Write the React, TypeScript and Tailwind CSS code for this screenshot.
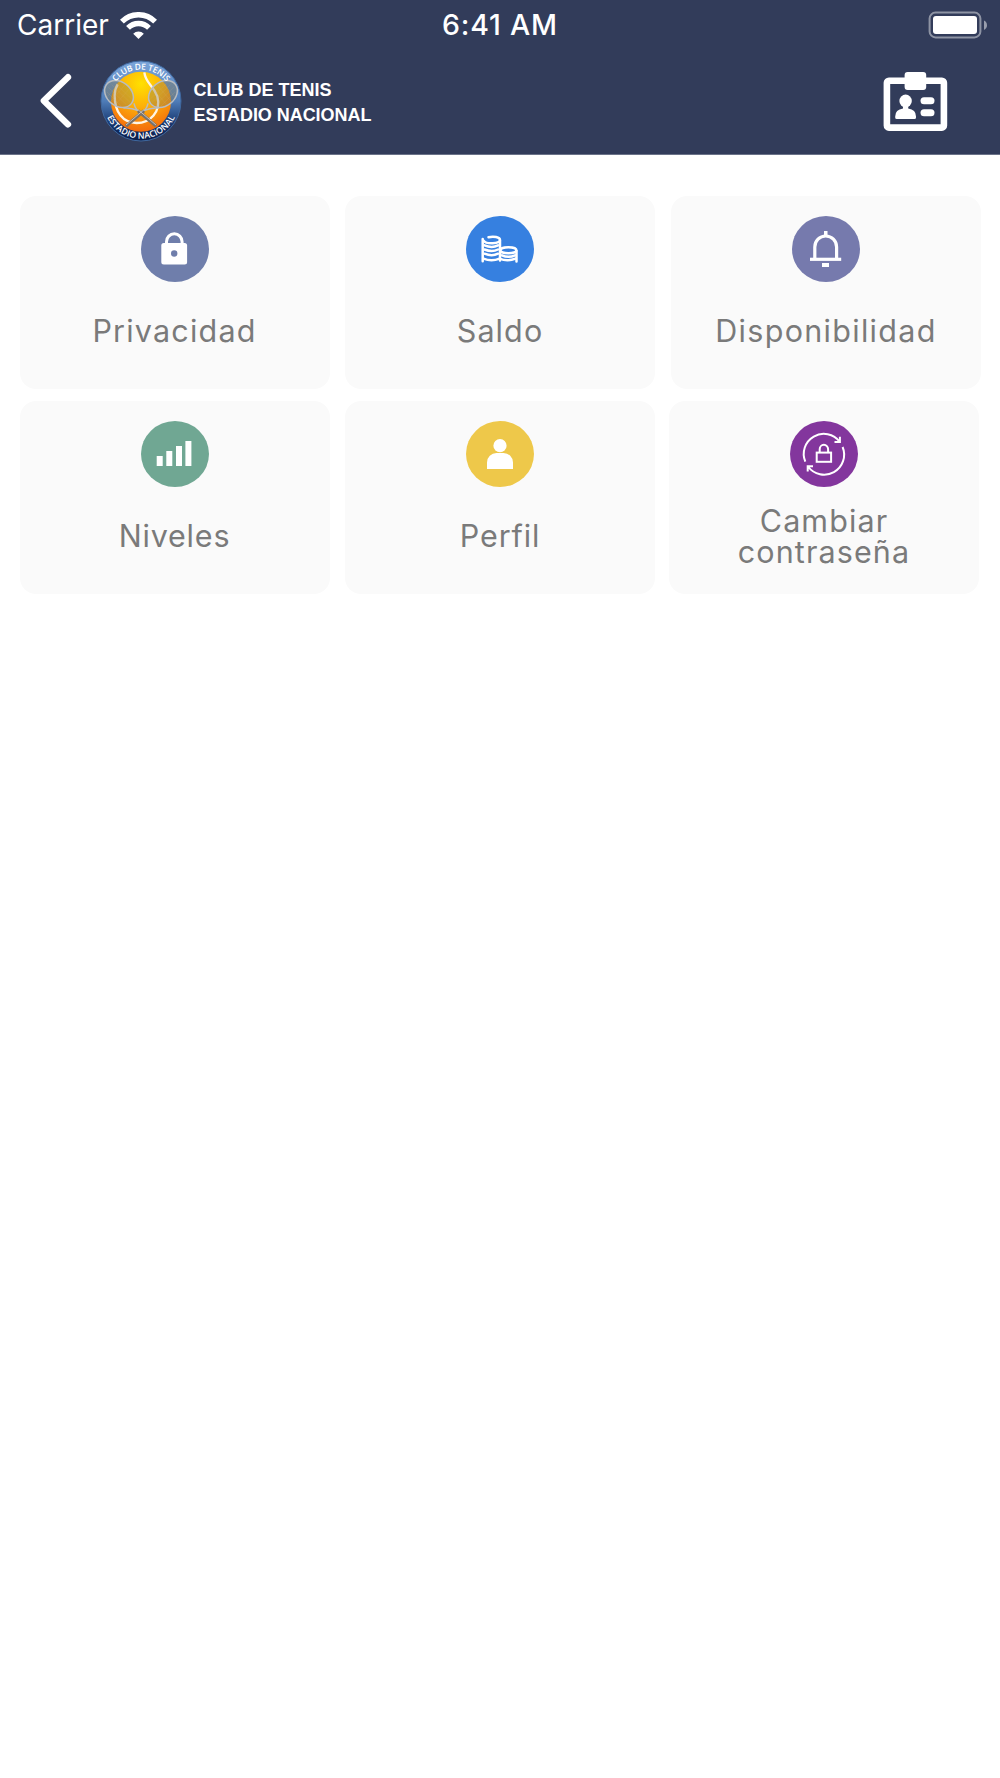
import type { ReactNode } from "react";

type TileProps = {
  label: string;
  color: string;
  className: string;
  textClass: string;
  children: ReactNode;
};

function Tile({ label, color, className, textClass, children }: TileProps) {
  return (
    <button className={`flex h-[193px] w-[310px] shrink-0 flex-col items-center rounded-[16px] bg-[#fafafa] pt-5 pb-[9px] ${className}`}>
      <svg width="68" height="66" viewBox="0 0 68 66" fill="none" className="shrink-0">
        <ellipse cx="34" cy="33" rx="34" ry="33" fill={color} />
        {children}
      </svg>
      <span className={`flex w-full flex-1 items-center justify-center text-center text-[30.5px] leading-[31.5px] text-[#7a7a7a] ${textClass}`}>
        {label}
      </span>
    </button>
  );
}

function StatusBar() {
  return (
    <div className="grid h-[50px] grid-cols-3 items-center text-white">
      <div className="flex items-center gap-[11px] pl-[17px]">
        <span className="text-[28px] leading-[50px]">Carrier</span>
        <svg width="37" height="27" viewBox="0 0 37 27" fill="none" stroke="#fff" strokeWidth="5.4">
          <path d="M1.9 9.6a23.4 23.4 0 0 1 33.2 0" />
          <path d="M8 15.9a14.8 14.8 0 0 1 21 0" />
          <path d="M18.5 27l-5.3-5.3a7.5 7.5 0 0 1 10.6 0z" fill="#fff" stroke="none" />
        </svg>
      </div>
      <span className="text-center text-[28.5px] font-medium leading-[50px] tracking-[0.8px]">6:41 AM</span>
      <div className="flex justify-end pr-[13px]">
        <svg width="59" height="28" viewBox="0 0 59 28" fill="none" className="-mt-px">
          <rect x="1.6" y="1.6" width="50.8" height="24.8" rx="6" stroke="#fff" strokeOpacity=".45" strokeWidth="2" />
          <rect x="5" y="5" width="44" height="18" rx="3" fill="#fff" />
          <path d="M56 9.5q3 1.5 3 4.7t-3 4.7z" fill="#fff" fillOpacity=".5" />
        </svg>
      </div>
    </div>
  );
}

function ClubLogo() {
  return (
    <svg width="82" height="82" viewBox="30 30 246 246" fill="none">
      <defs>
        <linearGradient id="ring" x1="0" y1="0" x2="0" y2="1">
          <stop offset="0" stopColor="#7ba5da" />
          <stop offset=".5" stopColor="#4f7db8" />
          <stop offset=".8" stopColor="#14336b" />
          <stop offset="1" stopColor="#0a1c48" />
        </linearGradient>
        <radialGradient id="ball" cx=".5" cy=".2" r=".85">
          <stop offset="0" stopColor="#ffe000" />
          <stop offset=".45" stopColor="#fdb00a" />
          <stop offset="1" stopColor="#f2620c" />
        </radialGradient>
        <path id="topArc" d="M57 155a96 96 0 0 1 192 0" />
        <path id="bottomArc" d="M40 153a113 113 0 0 0 226 0" />
      </defs>
      <circle cx="153" cy="153" r="120" fill="url(#ring)" stroke="#3f689f" strokeWidth="3" />
      <circle cx="153" cy="155" r="90" fill="url(#ball)" />
      <path d="M163 67c4 34 26 36 39 72 12 46-22 80-62 80-42 0-66-34-66-82 0-14 4-26 9-34" stroke="#fff5e4" strokeWidth="7" />
      {/* Rackets */}
      <g stroke="#b9bcc0" strokeWidth="4.5">
        <ellipse cx="87" cy="132" rx="47" ry="36" transform="rotate(38 87 132)" fill="#8a7c54" fillOpacity=".38" />
        <path d="M132 160q4 22 28 34M100 174q24-2 44 8" />
        <ellipse cx="219" cy="132" rx="47" ry="36" transform="rotate(-38 219 132)" fill="#8a7c54" fillOpacity=".38" />
        <path d="M174 160q-4 22-28 34M206 174q-24-2-44 8" />
      </g>
      <g stroke="#d8b877" strokeWidth="1" strokeOpacity=".45">
        <path d="M55 112l54 52M65 104l56 54M77 101l48 46M51 126l42 42M62 155l44-52M76 164l44-50M52 140l40-46" />
        <path d="M251 112l-54 52M241 104l-56 54M229 101l-48 46M255 126l-42 42M244 155l-44-52M230 164l-44-50M254 140l-40-46" />
      </g>
      <path d="M144 182l54 46M162 182l-54 46" stroke="#77716c" strokeWidth="10" />
      <path d="M144 179l54 46M162 179l-54 46" stroke="#c4c0bb" strokeWidth="3" />
      <g fill="#fff" fontFamily="Open Sans, Noto Sans, sans-serif" fontWeight="600" textAnchor="middle">
        <text fontSize="25" letterSpacing="-0.4">
          <textPath href="#topArc" startOffset="50%">CLUB DE TENIS</textPath>
        </text>
        <text fontSize="26" letterSpacing="0.3">
          <textPath href="#bottomArc" startOffset="50%">ESTADIO NACIONAL</textPath>
        </text>
      </g>
    </svg>
  );
}

function NavBar() {
  return (
    <div className="flex h-[104px] items-start pl-[39px] pr-[52px] text-white">
      <svg width="34" height="56" viewBox="0 0 34 56" fill="none" className="mt-[23px]">
        <path d="M29 4.2L4.8 27.8L29 51.4" stroke="#fff" strokeWidth="6.3" strokeLinecap="round" strokeLinejoin="round" />
      </svg>
      <div className="ml-[27px] mt-[10px]">
        <ClubLogo />
      </div>
      <div className="ml-[11.5px] mt-[28px] font-['Liberation_Sans',Arial,sans-serif] text-[18px] font-bold leading-[25px]">
        <div>CLUB DE TENIS</div>
        <div className="tracking-[-0.05px]">ESTADIO NACIONAL</div>
      </div>
      <svg width="65" height="60" viewBox="0 0 65 60" className="ml-auto mt-[22px]">
        <rect x="3.9" y="8.8" width="57" height="46.8" rx="2" fill="none" stroke="#fff" strokeWidth="6.6" />
        <rect x="21.6" y="0" width="21.6" height="18" rx="3" fill="#fff" />
        <ellipse cx="22.6" cy="29" rx="6.2" ry="6.4" fill="#fff" />
        <path d="M20 33h5.2v3.5q7.8 1 7.8 8v1q0 1.5-1.5 1.5h-17.8q-1.5 0-1.5-1.5v-1q0-7 7.800-8z" fill="#fff" />
        <rect x="37.5" y="25.3" width="14" height="7" rx="3.5" fill="#fff" />
        <rect x="37.5" y="37.3" width="14" height="7" rx="3.5" fill="#fff" />
      </svg>
    </div>
  );
}

export default function App() {
  return (
    <div className="min-h-[1778px] w-[1000px] bg-white font-['Inter',sans-serif]">
      <header className="h-[155px] border-b border-[#6b7389] bg-[#323c5a]">
        <StatusBar />
        <NavBar />
      </header>

      <main className="flex flex-col gap-3 pl-[19.5px] pt-[41px]">
        <div className="flex">
          <Tile label="Privacidad" color="#6f7eab" className="" textClass="tracking-[1.2px]">
            <rect x="20.3" y="27" width="25.8" height="21.4" rx="2.5" fill="#fff" />
            <path d="M25.5 28v-2.2a7.8 8 0 0 1 15.6 0V28" stroke="#fff" strokeWidth="3" />
            <circle cx="33.2" cy="37.5" r="3.2" fill="#6f7eab" />
          </Tile>
          <Tile label="Saldo" color="#3680e0" className="ml-[15.5px]" textClass="tracking-[1.1px]">
            <g stroke="#fff" strokeWidth="2.5" strokeLinecap="round">
              <path d="M16.7 23v22.3M34 24.5v20M50.5 35v10.5" />
              <path d="M22.5 21.2c5-1.3 11.5-.2 11.5 2.9 0 3.8-14 4.3-16.2.7" />
              <path d="M18.5 29.3q7.5 3.2 13.5 0M18.5 33.5q7.5 3.2 13.5 0M18.5 37.7q7.5 3.2 13.5 0M17.5 42.6q8 3.2 16 0q8 3.2 16 0" />
              <ellipse cx="42.4" cy="34.3" rx="8" ry="3" />
              <path d="M36 39.3q6.5 3 13 0" />
            </g>
          </Tile>
          <Tile label="Disponibilidad" color="#767aad" className="ml-[16px]" textClass="tracking-[1.3px]">
            <path d="M18 43.3h31.2" stroke="#fff" strokeWidth="3.2" />
            <path d="M22.8 43V31a10.9 11 0 0 1 21.8 0V43" stroke="#fff" strokeWidth="3.2" />
            <path d="M32 15h3.5v5H32zM30 47h7v4h-7z" fill="#fff" />
          </Tile>
        </div>

        <div className="flex">
          <Tile label="Niveles" color="#70a793" className="" textClass="tracking-[0.8px]">
            <path d="M15.7 35h6v10h-6zM25.3 30h6v15h-6zM35 25h6v20h-6zM44.4 20h6v25h-6z" fill="#fff" />
          </Tile>
          <Tile label="Perfil" color="#eec84a" className="ml-[15.5px]" textClass="tracking-[0.9px]">
            <circle cx="34" cy="24.7" r="6.6" fill="#fff" />
            <path d="M21 48v-6.5A9.5 9.5 0 0 1 30.5 32h7A9.5 9.5 0 0 1 47 41.5V48z" fill="#fff" />
          </Tile>
          <Tile label="Cambiar contraseña" color="#83369d" className="ml-[14px]" textClass="px-12 tracking-[1.1px]">
            <g stroke="#fff" strokeWidth="2">
              <path d="M15.3 40.6A20 20 0 0 1 49.7 20.8M49.9 15.8v5.2h-5.4" />
              <path d="M52.6 26A20 20 0 0 1 18 45.5M17.7 50.5v-5.2h5.3" />
              <rect x="26.7" y="31.6" width="14.4" height="9.2" />
              <path d="M29.7 31.5v-3.3a4.2 4.4 0 0 1 8.4 0v3.3" />
            </g>
          </Tile>
        </div>
      </main>
    </div>
  );
}
